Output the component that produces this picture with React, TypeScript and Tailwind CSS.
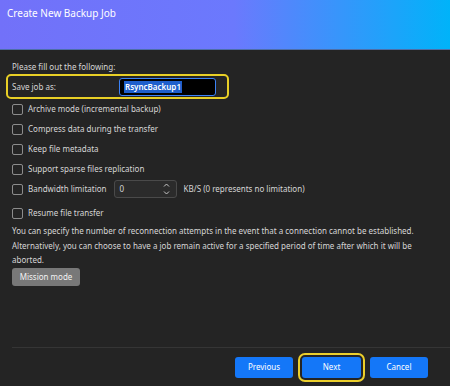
import React from "react"

const font = { fontFamily: '"Noto Sans", "Open Sans", sans-serif' }

function Check({ label }: { label: string }) {
  return (
    <div className="flex h-[20px] items-center pl-[12px]">
      <span className="h-[11px] w-[11px] rounded-[2px] border border-[#8c8c8c]" />
      <span className="ml-[5px] text-[8px] text-[#d6d6d6]">{label}</span>
    </div>
  )
}

export default function App() {
  return (
    <div className="flex h-[386px] w-[450px] flex-col bg-[#242424]" style={font}>
      <div className="h-[50px] border-b border-[#4d6ea8] bg-[linear-gradient(90deg,#7271f9_0%,#6b79fd_52%,#00b3f9_100%)] px-[7px] pt-[6px]">
        <div className="text-[10px] leading-[14px] text-white">Create New Backup Job</div>
      </div>

      <div className="mt-[10px] h-[14px] pl-[12px] text-[8px] leading-[14px] text-[#d6d6d6]">
        Please fill out the following:
      </div>

      <div className="ml-[6px] flex h-[25px] w-[223px] items-center rounded-[5px] border-2 border-[#e8cf26] pl-[4px]">
        <span className="text-[8px] text-[#d6d6d6]">Save job as:</span>
        <div className="ml-auto mr-[11px] flex h-[18px] w-[97px] items-center rounded-[3px] border border-[#3b82f6] bg-black pl-[4px]">
          <span className="bg-[#1e5fcc] px-[1px] text-[8px] font-semibold leading-[12px] text-white">RsyncBackup1</span>
        </div>
      </div>

      <Check label="Archive mode (incremental backup)" />
      <Check label="Compress data during the transfer" />
      <Check label="Keep file metadata" />
      <Check label="Support sparse files replication" />

      <div className="flex h-[20px] items-center pl-[12px]">
        <span className="h-[11px] w-[11px] rounded-[2px] border border-[#8c8c8c]" />
        <span className="ml-[5px] text-[8px] text-[#d6d6d6]">Bandwidth limitation</span>
        <div className="ml-[7px] flex h-[18px] w-[63px] items-center rounded-[3px] border border-[#4a4a4a] bg-[#2b2b2b] pl-[5px]">
          <span className="text-[8px] text-[#d6d6d6]">0</span>
          <svg className="ml-auto mr-[6px]" width="7" height="14" viewBox="0 0 7 14" fill="none" stroke="#c8c8c8" strokeWidth="1">
            <path d="M1 4.5 3.5 2 6 4.5" />
            <path d="M1 9.5 3.5 12 6 9.5" />
          </svg>
        </div>
        <span className="ml-[7px] text-[8px] text-[#d6d6d6]">KB/S (0 represents no limitation)</span>
      </div>

      <div className="mt-[4px]">
        <Check label="Resume file transfer" />
      </div>

      <p className="mt-[1px] w-[420px] pl-[12px] text-[8px] leading-[14.5px] text-[#d6d6d6]">
        You can specify the number of reconnection attempts in the event that a connection cannot be established. Alternatively, you can choose to have a job remain active for a specified period of time after which it will be aborted.
      </p>

      <div className="mt-[0px] flex pl-[12px]">
        <button className="h-[18px] w-[68px] rounded-[3px] bg-[#787878] text-[8px] text-[#f2f2f2]">Mission mode</button>
      </div>

      <div className="flex-1" />

      <div className="ml-[12px] border-t border-[#353535]" />
      <div className="flex h-[38px] items-center justify-end gap-[9px] pr-[22px]">
        <button className="h-[21px] w-[58px] rounded-[3px] bg-[#1477f8] text-[8px] text-white">Previous</button>
        <button className="h-[21px] w-[59px] rounded-[3px] bg-[#1477f8] text-[8px] text-white outline-2 outline-offset-2 outline-[#eccf2b]">Next</button>
        <button className="h-[21px] w-[58px] rounded-[3px] bg-[#1477f8] text-[8px] text-white">Cancel</button>
      </div>
    </div>
  )
}
